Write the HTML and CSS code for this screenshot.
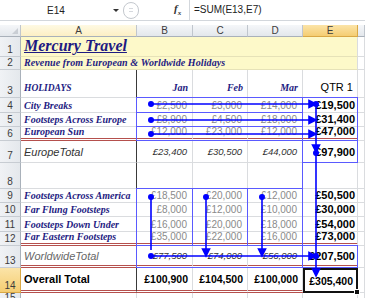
FILE: index.html
```html
<!DOCTYPE html>
<html lang="en">
<head>
  <meta charset="UTF-8" />
  <title>Mercury Travel - Trace Precedents</title>
  <link rel="stylesheet" href="styles.css">
</head>
<body>
<div class="app">
  <!-- formula bar -->
  <div class="fbar">
    <div class="namebox">E14</div>
    <div class="dd"></div>
    <div class="knob"><span></span></div>
    <div class="fx"><i>f</i><sub>x</sub></div>
    <div class="formula">=SUM(E13,E7)</div>
  </div>

  <!-- worksheet -->
  <div class="sheet">
    <div class="row">
      <div class="ch corner"></div>
      <div class="ch hl">A</div>
      <div class="ch">B</div>
      <div class="ch">C</div>
      <div class="ch">D</div>
      <div class="ch sel">E</div>
      <div class="ch"></div>
    </div>

    <div class="row">
      <div class="rh">1</div>
      <div class="c fill title-cell"><span class="title">Mercury Travel</span></div>
      <div class="c"></div>
    </div>
    <div class="row">
      <div class="rh">2</div>
      <div class="c fill"><span class="sub">Revenue from European &amp; Worldwide Holidays</span></div>
      <div class="c"></div>
    </div>
    <div class="row r3">
      <div class="rh">3</div>
      <div class="c colA"><span class="hol">HOLIDAYS</span></div>
      <div class="c num mon">Jan</div>
      <div class="c num mon">Feb</div>
      <div class="c num mon">Mar</div>
      <div class="c num qtr">QTR 1</div>
      <div class="c"></div>
    </div>

    <div class="row">
      <div class="rh">4</div>
      <div class="c colA name">City Breaks</div>
      <div class="c num g">£2,500</div>
      <div class="c num g">£3,000</div>
      <div class="c num g">£14,000</div>
      <div class="c num b">£19,500</div>
      <div class="c"></div>
    </div>
    <div class="row">
      <div class="rh">5</div>
      <div class="c colA name">Footsteps Across Europe</div>
      <div class="c num g">£8,900</div>
      <div class="c num g">£4,500</div>
      <div class="c num g">£18,000</div>
      <div class="c num b">£31,400</div>
      <div class="c"></div>
    </div>
    <div class="row dbl">
      <div class="rh">6</div>
      <div class="c colA name">European Sun</div>
      <div class="c num g">£12,000</div>
      <div class="c num g">£23,000</div>
      <div class="c num g">£12,000</div>
      <div class="c num b">£47,000</div>
      <div class="c plain"></div>
    </div>
    <div class="row mid">
      <div class="rh">7</div>
      <div class="c colA lbl">EuropeTotal</div>
      <div class="c num it">£23,400</div>
      <div class="c num it">£30,500</div>
      <div class="c num it">£44,000</div>
      <div class="c num b">£97,900</div>
      <div class="c"></div>
    </div>
    <div class="row">
      <div class="rh">8</div>
      <div class="c colA"></div>
      <div class="c"></div>
      <div class="c"></div>
      <div class="c"></div>
      <div class="c"></div>
      <div class="c"></div>
    </div>

    <div class="row">
      <div class="rh">9</div>
      <div class="c colA name">Footsteps Across America</div>
      <div class="c num g">£18,500</div>
      <div class="c num g">£20,000</div>
      <div class="c num g">£12,000</div>
      <div class="c num b">£50,500</div>
      <div class="c"></div>
    </div>
    <div class="row">
      <div class="rh">10</div>
      <div class="c colA name">Far Flung Footsteps</div>
      <div class="c num g">£8,000</div>
      <div class="c num g">£12,000</div>
      <div class="c num g">£10,000</div>
      <div class="c num b">£30,000</div>
      <div class="c"></div>
    </div>
    <div class="row">
      <div class="rh">11</div>
      <div class="c colA name">Footsteps Down Under</div>
      <div class="c num g">£16,000</div>
      <div class="c num g">£20,000</div>
      <div class="c num g">£18,000</div>
      <div class="c num b">£54,000</div>
      <div class="c"></div>
    </div>
    <div class="row dbl">
      <div class="rh">12</div>
      <div class="c colA name">Far Eastern Footsteps</div>
      <div class="c num g">£35,000</div>
      <div class="c num g">£22,000</div>
      <div class="c num g">£16,000</div>
      <div class="c num b">£73,000</div>
      <div class="c plain"></div>
    </div>
    <div class="row dbl mid">
      <div class="rh">13</div>
      <div class="c colA lbl ww">WorldwideTotal</div>
      <div class="c num it">£77,500</div>
      <div class="c num it">£74,000</div>
      <div class="c num it">£56,000</div>
      <div class="c num b">£207,500</div>
      <div class="c plain"></div>
    </div>
    <div class="row dbl mid">
      <div class="rh sel">14</div>
      <div class="c colA overall">Overall Total</div>
      <div class="c num tot">£100,900</div>
      <div class="c num tot">£104,500</div>
      <div class="c num tot">£100,000</div>
      <div class="c num tot active">£305,400</div>
      <div class="c plain"></div>
    </div>
    <div class="row">
      <div class="rh">15</div>
      <div class="c"></div>
      <div class="c"></div>
      <div class="c"></div>
      <div class="c"></div>
      <div class="c"></div>
      <div class="c"></div>
    </div>
  </div>

  <!-- trace precedents arrows -->
  <svg class="arrows" width="365" height="298" viewBox="0 0 365 298">
    <g fill="none" stroke="#5a5aff" stroke-width="1">
      <rect x="136.5" y="97.5" width="166" height="15"/>
      <rect x="136.5" y="112.5" width="166" height="14"/>
      <rect x="136.5" y="126.5" width="166" height="14"/>
      <rect x="302.5" y="97.5" width="55" height="43"/>
      <rect x="302.5" y="140.5" width="55" height="22"/>
      <line x1="302.5" y1="162.5" x2="302.5" y2="188.5"/>
      <rect x="136.5" y="188.5" width="56" height="57"/>
      <rect x="192.5" y="188.5" width="55" height="57"/>
      <rect x="247.5" y="188.5" width="55" height="57"/>
      <rect x="136.5" y="245.5" width="166" height="22"/>
      <rect x="302.5" y="245.5" width="55" height="22"/>
    </g>
    <g stroke="#0000ff" stroke-width="1.6" fill="#0000ff">
      <!-- row sums -->
      <line x1="151" y1="104" x2="310" y2="104"/>
      <circle cx="151" cy="104" r="2.2"/>
      <polygon points="309,100.5 316,104 309,107.5"/>
      <line x1="151" y1="120" x2="310" y2="120"/>
      <circle cx="151" cy="120" r="2.2"/>
      <polygon points="309,116.5 316,120 309,123.5"/>
      <line x1="151" y1="134" x2="310" y2="134"/>
      <circle cx="151" cy="134" r="2.2"/>
      <polygon points="309,130.5 316,134 309,137.5"/>
      <line x1="151" y1="256" x2="310" y2="256"/>
      <circle cx="151" cy="256" r="2.2"/>
      <polygon points="309,252.5 316,256 309,259.5"/>
      <!-- column sums -->
      <line x1="151" y1="197" x2="151" y2="250"/>
      <circle cx="151" cy="197" r="2.2"/>
      <line x1="206" y1="197" x2="206" y2="250"/>
      <circle cx="206" cy="197" r="2.2"/>
      <polygon points="202.5,249 206,256 209.5,249"/>
      <line x1="262" y1="197" x2="262" y2="250"/>
      <circle cx="262" cy="197" r="2.2"/>
      <polygon points="258.5,249 262,256 265.5,249"/>
      <!-- totals in E -->
      <line x1="316" y1="104" x2="316" y2="146"/>
      <circle cx="316" cy="104" r="2.2"/>
      <polygon points="312.5,145 316,152 319.5,145"/>
      <line x1="316" y1="152" x2="316" y2="270"/>
      <circle cx="316" cy="153" r="2.2"/>
      <circle cx="316" cy="256" r="2.2"/>
      <polygon points="312.5,269 316,276 319.5,269"/>
    </g>
  </svg>
</div>
</body>
</html>
```

FILE: styles.css
```css
body {
  margin: 0;
  background: #fff;
  font-family: "Liberation Sans", Arial, sans-serif;
}
.app {
  position: relative;
  width: 365px;
  height: 298px;
  overflow: hidden;
}

/* formula bar */
.fbar {
  display: flex;
  align-items: center;
  height: 20px;
  border-bottom: 1px solid #d3d7dc;
  margin-bottom: 4px;
  font-size: 10px;
  color: #222;
}
.namebox {
  width: 112px;
  text-align: center;
}
.dd {
  width: 0;
  height: 0;
  margin-left: 1px;
  border-left: 3px solid transparent;
  border-right: 3px solid transparent;
  border-top: 3px solid #333;
}
.knob {
  width: 14px;
  height: 15px;
  margin-left: 4px;
  border: 1px solid #c4c8ce;
  border-radius: 8px;
  display: flex;
  align-items: center;
  justify-content: center;
}
.knob span {
  width: 4px;
  height: 2px;
  border-top: 1px solid #d6d9de;
  border-bottom: 1px solid #d6d9de;
}
.fx {
  width: 11px;
  margin-left: 35px;
  font-family: "Liberation Serif", serif;
  font-weight: bold;
  font-size: 11px;
  color: #333;
}
.fx sub {
  font-size: 7px;
  font-style: italic;
}
.formula {
  margin-left: 4px;
  height: 20px;
  line-height: 20px;
  padding-left: 4px;
  border-left: 1px solid #d3d7dc;
  flex: 1;
}

/* grid */
.sheet {
  display: grid;
  grid-template-columns: 21px 116px 56px 55px 55px 55px 7px;
  grid-template-rows: 12px 20px 13px 28px 15px 14px 14px 22px 26px 14px 14px 15px 14px 22px 25px 12px;
}
.row {
  display: contents;
}
.ch {
  box-sizing: border-box;
  display: flex;
  align-items: center;
  justify-content: center;
  background: linear-gradient(#f5f7f9, #e3e7ec);
  border-right: 1px solid #c0c6cd;
  border-bottom: 1px solid #a9b1ba;
  font-size: 10px;
  color: #3c3c3c;
}
.ch.corner {
  position: relative;
}
.ch.corner::after {
  content: "";
  position: absolute;
  right: 2px;
  bottom: 2px;
  border-left: 6px solid transparent;
  border-bottom: 6px solid #c9ced4;
}
.ch.hl {
  background: linear-gradient(#fef9e3, #fcefc4);
}
.ch.sel,
.rh.sel {
  background: linear-gradient(#fbe4a8, #f5cd72);
  border-color: #d9a845;
}
.rh {
  box-sizing: border-box;
  display: flex;
  align-items: flex-end;
  justify-content: center;
  padding-bottom: 1px;
  background: linear-gradient(90deg, #f0f2f5, #e4e8ec);
  border-right: 1px solid #a9b1ba;
  border-bottom: 1px solid #c7ccd2;
  font-size: 10px;
  color: #3c3c3c;
}
.c {
  box-sizing: border-box;
  display: flex;
  align-items: flex-end;
  padding: 0 3px 1px;
  border-right: 1px solid #dadcdf;
  border-bottom: 1px solid #dadcdf;
  white-space: nowrap;
  font-size: 10px;
  color: #000;
  min-width: 0;
}
.num {
  justify-content: flex-end;
}
.colA {
  border-right-color: #3a3a3a;
}
.fill {
  grid-column: 2 / 7;
  background: #fdf9c9;
  border-bottom-color: #e6e2b8;
}
.title {
  font-family: "Liberation Serif", serif;
  font-style: italic;
  font-weight: bold;
  font-size: 16px;
  color: #1e1b82;
  text-decoration: underline;
  text-decoration-thickness: 1px;
}
.sub,
.hol,
.name,
.mon {
  font-family: "Liberation Serif", serif;
  font-style: italic;
  font-weight: bold;
  color: #1e1b82;
}
.sub {
  font-size: 10px;
  letter-spacing: 0.1px;
}
.r3 .c {
  padding-bottom: 4px;
}
.hol {
  font-size: 9.5px;
}
.name {
  font-size: 10px;
}
.mon {
  font-size: 10px;
  padding-right: 4px;
}
.qtr {
  font-size: 11px;
  padding-right: 4px;
}
.g {
  color: #8a8a8a;
  padding-right: 5px;
}
.b {
  font-weight: bold;
  font-size: 11px;
  padding-right: 2px;
}
.it {
  font-style: italic;
  font-size: 9.5px;
  color: #333;
  padding-right: 5px;
}
.lbl {
  font-style: italic;
  font-size: 11px;
  color: #333;
}
.lbl.ww {
  color: #666;
}
.mid .c {
  align-items: center;
  padding-bottom: 0;
}
.dbl .c {
  border-bottom: 3px double #b5504d;
}
.dbl .c.plain {
  border-bottom: 1px solid #dadcdf;
}
.overall {
  font-weight: bold;
  font-size: 11px;
}
.tot {
  font-weight: bold;
  font-size: 10.5px;
  padding-right: 4px;
}
.c.active {
  position: relative;
  border: 2px solid #111;
  padding-right: 3px;
}
.c.active::after {
  content: "";
  position: absolute;
  right: -4px;
  bottom: -4px;
  width: 4px;
  height: 4px;
  background: #111;
  border: 1px solid #fff;
}

/* overlay */
.arrows {
  position: absolute;
  top: 0;
  left: 0;
  pointer-events: none;
}
```
